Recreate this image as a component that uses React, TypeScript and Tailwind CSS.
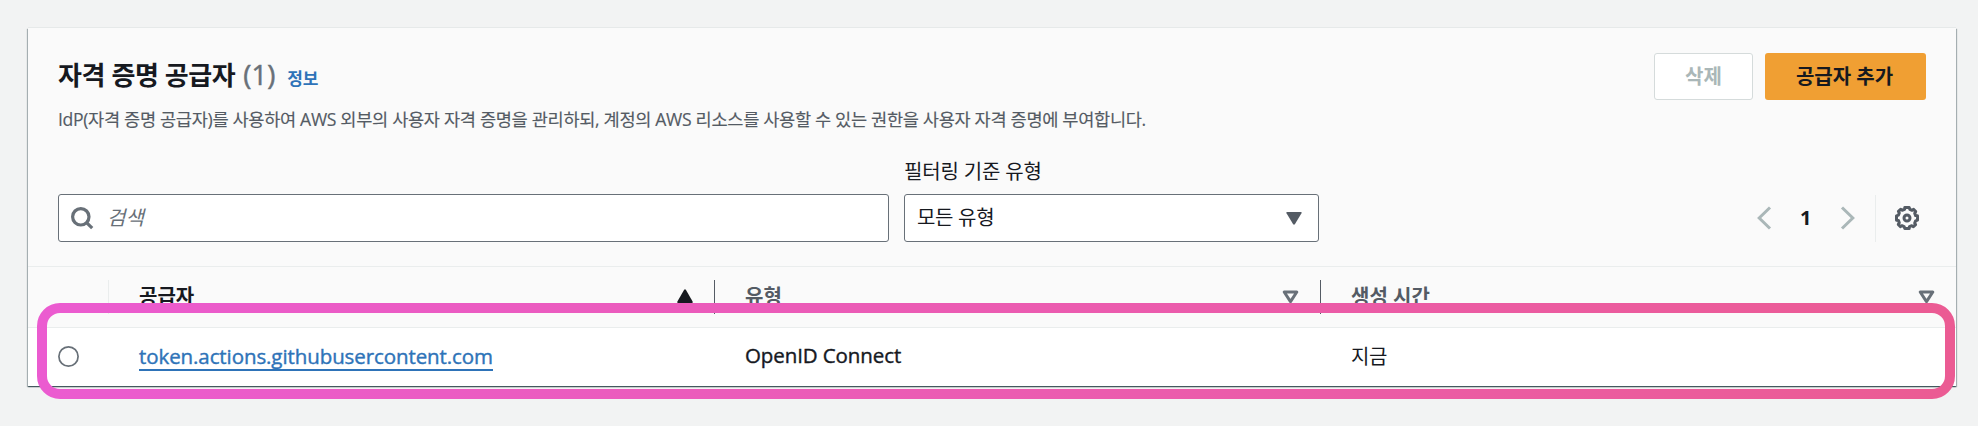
import type { ReactNode } from "react";

function SearchIcon() {
  return (
    <svg width="23" height="24" viewBox="0 0 23 24" fill="none" stroke="#687078" strokeWidth="3.2">
      <circle cx="9.8" cy="10.8" r="8.2" />
      <path d="M15.3 16.4 21.2 22.2" />
    </svg>
  );
}

function GearIcon() {
  return (
    <svg width="26" height="26" viewBox="-13 -13 26 26" fill="none" stroke="#545b64" strokeWidth="3" strokeLinejoin="round">
      <path d="M-2.2 -10.5H2.2L2.9 -8.6L5 -7.7L6.7 -8.6L8.7 -6.4L7.7 -4.8L8.6 -2.4L10.5 -2.2V2.2L8.6 2.9L7.7 5L8.6 6.7L6.4 8.7L4.8 7.7L2.4 8.6L2.2 10.5H-2.2L-2.9 8.6L-5 7.7L-6.7 8.6L-8.7 6.4L-7.7 4.8L-8.6 2.4L-10.5 2.2V-2.2L-8.6 -2.9L-7.7 -5L-8.6 -6.7L-6.4 -8.7L-4.8 -7.7L-2.4 -8.6Z" />
      <circle r="3" />
    </svg>
  );
}

function Chevron({ flip = false }: { flip?: boolean }) {
  return (
    <svg width="16" height="24" viewBox="0 0 16 24" fill="none" stroke="#aab7b8" strokeWidth="3" className={flip ? "rotate-180" : ""}>
      <path d="M14 1.5 3.2 12 14 22.5" />
    </svg>
  );
}

function SortIcon() {
  return (
    <svg width="17" height="14" viewBox="0 0 17 14" fill="none" stroke="#687078" strokeWidth="3" strokeLinejoin="round">
      <path d="M2.2 2h12.6L8.5 11.6Z" />
    </svg>
  );
}

function HeaderCell({ children, className }: { children: ReactNode; className: string }) {
  return <div className={`flex h-[34px] justify-between pl-[30px] ${className}`}>{children}</div>;
}

export default function App() {
  return (
    <main className="relative h-[426px] w-[1978px] overflow-hidden bg-[#f2f3f3] pl-[28px] pt-[28px] font-['Open_Sans','Noto_Sans_CJK_KR',sans-serif] text-[20px] text-[#16191f]">
      <section className="flex h-[358px] w-[1928px] flex-col bg-[#fafafa] shadow-[0_-1px_0_#e6e9e9,0_1px_1px_0_rgba(0,28,36,0.5),1px_1px_1px_0_rgba(0,28,36,0.25),-1px_1px_1px_0_rgba(0,28,36,0.25)]">
        <div className="flex h-[238px] flex-col px-[30px] pt-[25px]">
          <header className="flex h-[109px] justify-between">
            <div>
              <h1 className="flex h-[47px] items-baseline leading-[44px]">
                <span className="text-[26px] font-bold tracking-[-0.4px]">자격 증명 공급자</span>
                <span className="ml-[8px] text-[27.5px] text-[#687078] [-webkit-text-stroke:0.5px_#687078]">(1)</span>
                <a className="ml-[12px] text-[17px] font-bold tracking-[-0.3px] text-[#2e73b8]">정보</a>
              </h1>
              <p className="whitespace-nowrap text-[17.6px] leading-[39px] tracking-[-0.335px] text-[#545b64] [-webkit-text-stroke:0.15px_#545b64]">
                IdP(자격 증명 공급자)를 사용하여 AWS 외부의 사용자 자격 증명을 관리하되, 계정의 AWS 리소스를 사용할 수 있는 권한을 사용자 자격 증명에 부여합니다.
              </p>
            </div>
            <div className="flex h-[47px] gap-[12px] font-bold">
              <button className="h-[47px] w-[99px] rounded-[3px] border border-[#d5dbdb] bg-white text-[#aab7b8]">삭제</button>
              <button className="h-[47px] w-[161px] rounded-[3px] bg-[#f09f33] pr-[2px]">공급자 추가</button>
            </div>
          </header>
          <div className="flex items-end">
            <div className="flex h-[48px] w-[831px] items-center rounded-[3px] border border-[#687078] bg-white pl-[12px]">
              <SearchIcon />
              <span className="ml-[13px] italic text-[#687078]">검색</span>
            </div>
            <div className="ml-[15px] flex w-[415px] flex-col">
              <span className="h-[32px] self-start leading-[20px] tracking-[-0.15px]">필터링 기준 유형</span>
              <div className="flex h-[48px] items-center justify-between rounded-[3px] border border-[#687078] bg-white pl-[12px] pr-[16px]">
                <span className="tracking-[-0.3px]">모든 유형</span>
                <svg width="16" height="13" viewBox="0 0 16 13" fill="#545b64"><path d="M1.2 0h13.6q1.4 0 .7 1.3L9 12q-1 1.5-2 0L.5 1.3Q-.2 0 1.2 0Z" /></svg>
              </div>
            </div>
            <div className="ml-auto flex h-[48px] items-center">
              <Chevron />
              <span className="ml-[28px] w-[14px] font-bold">1</span>
              <span className="ml-[26px] flex"><Chevron flip /></span>
              <span className="ml-[19px] h-[47px] w-px bg-[#eaeded]" />
              <span className="ml-[18px] mr-[6px]"><GearIcon /></span>
            </div>
          </div>
        </div>
        <div className="flex h-[62px] border-y border-[#eaeded] pt-[13px] font-bold leading-[33px] text-[#545b64]">
          <div className="h-[34px] w-[81px] border-r border-[#eaeded]" />
          <HeaderCell className="w-[606px] border-r border-[#545b64] pr-[21px] text-[#16191f]">
            <span>공급자</span>
            <svg width="16" height="14" viewBox="0 0 16 14" fill="#16191f" className="mt-[9px]"><path d="M7 1q1-1.6 2 0l6.6 11.5Q16 14 14.8 14H1.2Q0 14 .4 12.5Z" /></svg>
          </HeaderCell>
          <HeaderCell className="w-[606px] border-r border-[#545b64] pr-[21px]">
            <span>유형</span>
            <span className="mt-[10px]"><SortIcon /></span>
          </HeaderCell>
          <HeaderCell className="flex-1 pr-[21px]">
            <span>생성 시간</span>
            <span className="mt-[10px]"><SortIcon /></span>
          </HeaderCell>
        </div>
        <div className="flex h-[58px] items-center bg-white">
          <svg width="21" height="22" viewBox="0 0 21 22" fill="#fff" stroke="#687078" strokeWidth="1.7" className="ml-[30px]">
            <circle cx="10.5" cy="10.5" r="9.6" />
          </svg>
          <div className="ml-[60px] flex h-[58px] w-[606px] items-start pt-[15px] text-[20.5px]">
            <a className="h-[28px] whitespace-nowrap border-b-2 border-[#2e73b8] leading-[26px] tracking-[-0.09px] text-[#2e73b8] [-webkit-text-stroke:0.4px_#2e73b8]">token.actions.githubusercontent.com</a>
          </div>
          <div className="w-[606px] pb-[3px] text-[20.5px] tracking-[-0.1px] [-webkit-text-stroke:0.4px_#16191f]">OpenID Connect</div>
          <span className="pb-px tracking-[-0.5px]">지금</span>
        </div>
      </section>
      <svg className="pointer-events-none absolute left-[37px] top-[303px] h-[96px] w-[1918px]" viewBox="0 0 1918 96" fill="none">
        <defs>
          <linearGradient id="ring" x1="0" y1="0" x2="1" y2="0">
            <stop offset="0" stopColor="#eb5bd0" />
            <stop offset="1" stopColor="#eb5b93" />
          </linearGradient>
        </defs>
        <rect x="5" y="5" width="1908" height="86" rx="18" stroke="url(#ring)" strokeWidth="10" />
      </svg>
    </main>
  );
}
